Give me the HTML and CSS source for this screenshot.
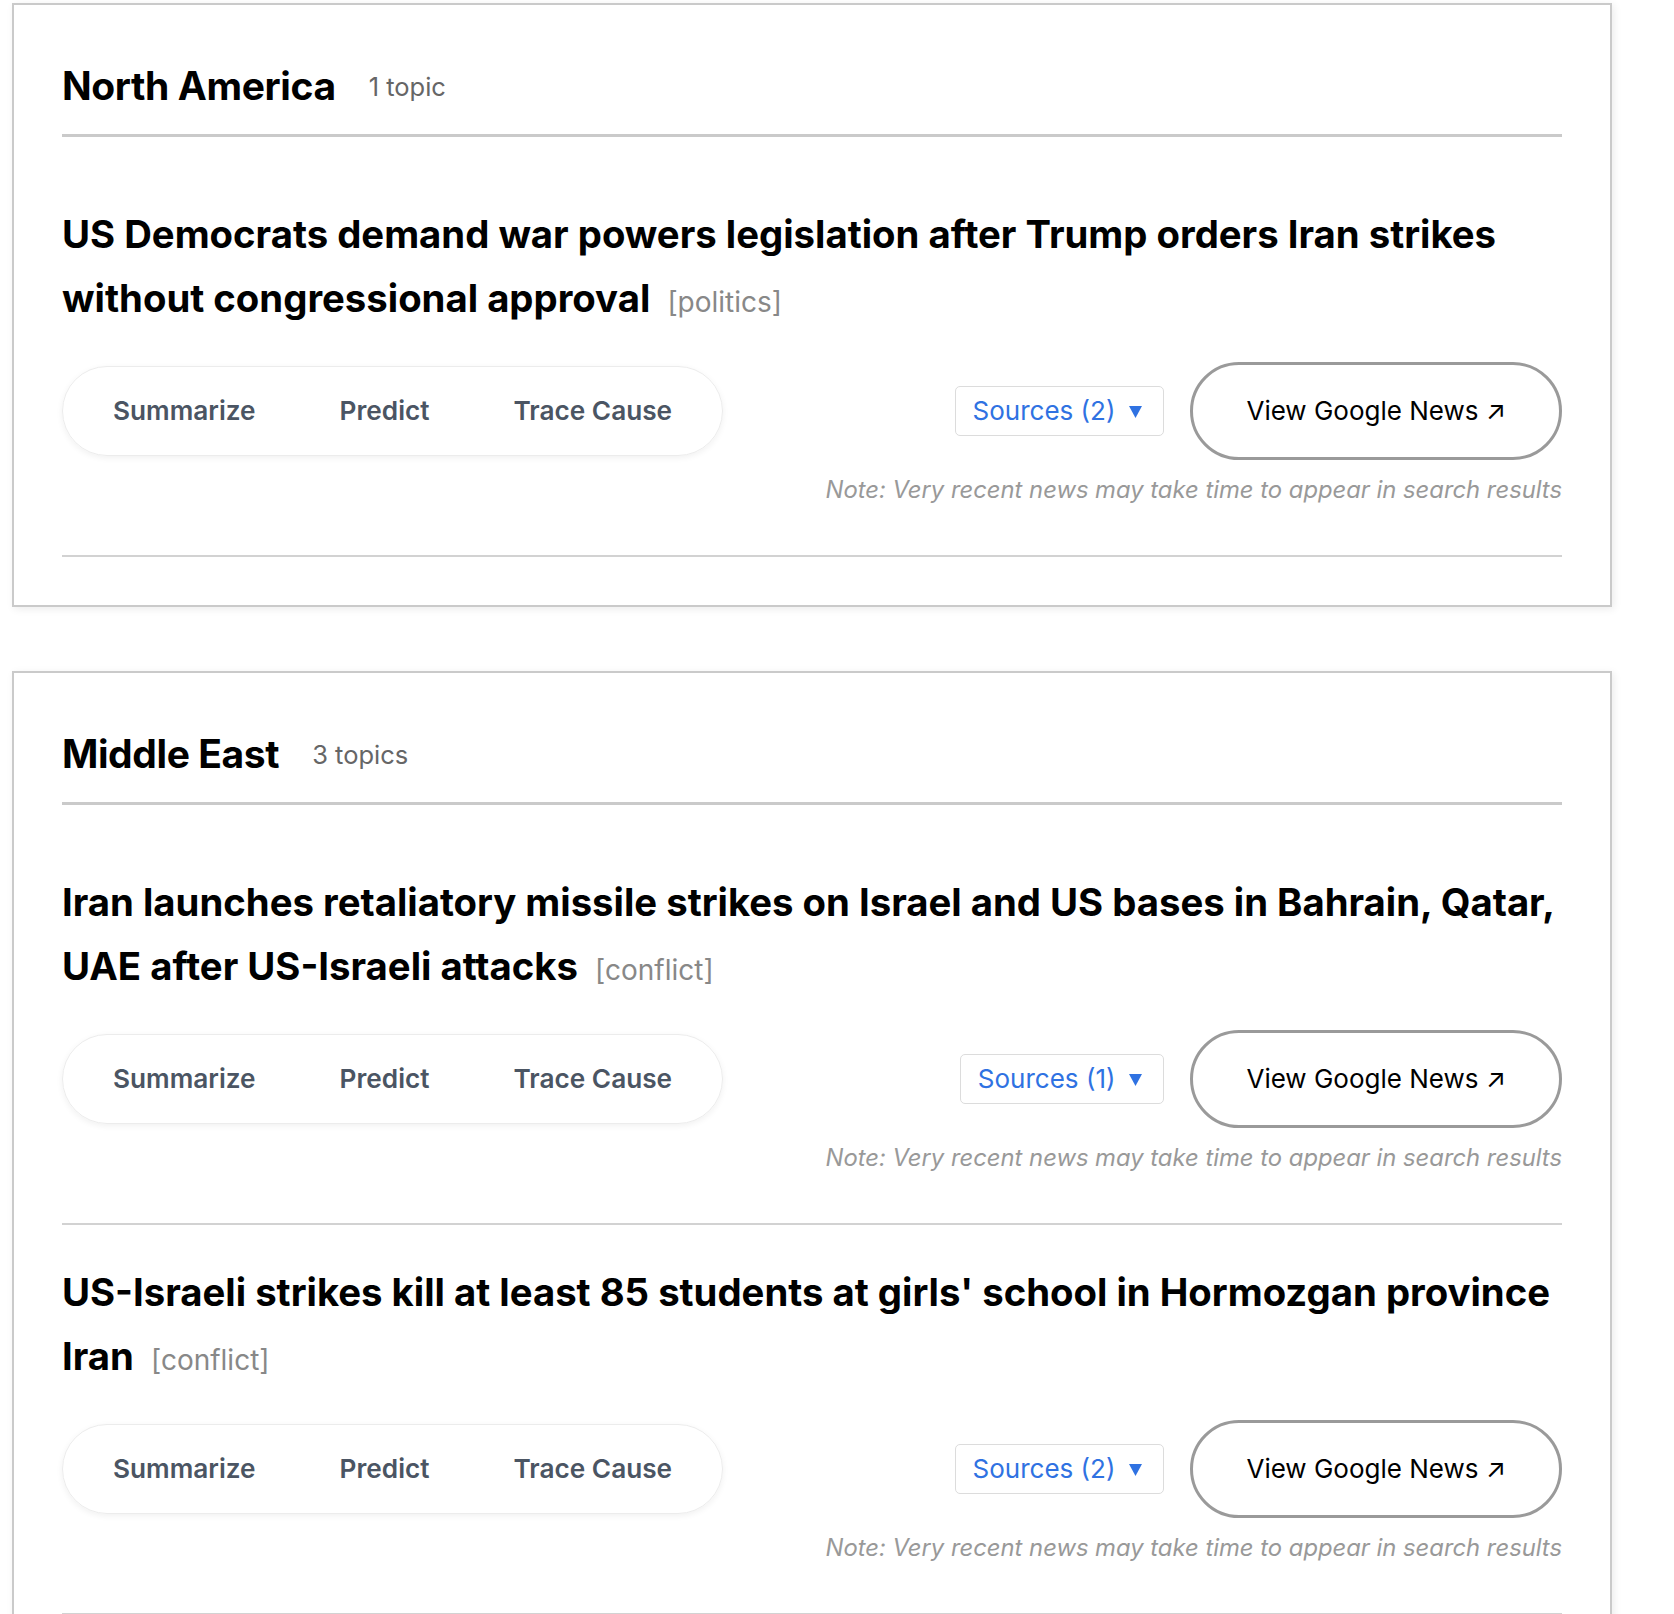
FILE: index.html
```html
<!DOCTYPE html>
<html lang="en">
<head>
    <meta charset="UTF-8">
    <meta name="viewport" content="width=device-width, initial-scale=1.0">
    <title>World News Topics</title>
    <link rel="stylesheet" href="styles.css">
</head>
<body>
    <section class="region-card">
        <div class="region-header">
            <h2 class="region-name">North America</h2>
            <span class="topic-count">1 topic</span>
        </div>
        <div class="topic">
            <h3 class="topic-title">US Democrats demand war powers legislation after Trump orders Iran strikes without congressional approval <span class="topic-category">[politics]</span></h3>
            <div class="topic-actions">
                <div class="action-pill">
                    <button class="action-btn">Summarize</button>
                    <button class="action-btn">Predict</button>
                    <button class="action-btn">Trace Cause</button>
                </div>
                <button class="sources-btn">Sources (2)
                    <svg class="caret" width="13" height="13" viewBox="0 0 13 13"><polygon points="0,1 13,1 6.5,13" fill="currentColor"/></svg>
                </button>
                <a class="news-link" href="#">View Google News ↗</a>
            </div>
            <p class="news-note">Note: Very recent news may take time to appear in search results</p>
        </div>
    </section>

    <section class="region-card">
        <div class="region-header">
            <h2 class="region-name">Middle East</h2>
            <span class="topic-count">3 topics</span>
        </div>
        <div class="topic">
            <h3 class="topic-title">Iran launches retaliatory missile strikes on Israel and US bases in Bahrain, Qatar, UAE after US-Israeli attacks <span class="topic-category">[conflict]</span></h3>
            <div class="topic-actions">
                <div class="action-pill">
                    <button class="action-btn">Summarize</button>
                    <button class="action-btn">Predict</button>
                    <button class="action-btn">Trace Cause</button>
                </div>
                <button class="sources-btn">Sources (1)
                    <svg class="caret" width="13" height="13" viewBox="0 0 13 13"><polygon points="0,1 13,1 6.5,13" fill="currentColor"/></svg>
                </button>
                <a class="news-link" href="#">View Google News ↗</a>
            </div>
            <p class="news-note">Note: Very recent news may take time to appear in search results</p>
        </div>
        <div class="topic">
            <h3 class="topic-title">US-Israeli strikes kill at least 85 students at girls' school in Hormozgan province Iran <span class="topic-category">[conflict]</span></h3>
            <div class="topic-actions">
                <div class="action-pill">
                    <button class="action-btn">Summarize</button>
                    <button class="action-btn">Predict</button>
                    <button class="action-btn">Trace Cause</button>
                </div>
                <button class="sources-btn">Sources (2)
                    <svg class="caret" width="13" height="13" viewBox="0 0 13 13"><polygon points="0,1 13,1 6.5,13" fill="currentColor"/></svg>
                </button>
                <a class="news-link" href="#">View Google News ↗</a>
            </div>
            <p class="news-note">Note: Very recent news may take time to appear in search results</p>
        </div>
    </section>
</body>
</html>
```

FILE: styles.css
```css
body {
    margin: 0;
    padding: 3px 0 0 12px;
    background-color: #fff;
    font-family: Inter, "Noto Sans", sans-serif;
    color: #000;
}
.region-card {
    box-sizing: border-box;
    width: 1600px;
    padding: 57px 48px 48px 48px;
    margin-bottom: 64px;
    border: 2px solid #cacaca;
    background-color: #fff;
    box-shadow: 2px 2px 8px rgba(0, 0, 0, 0.08);
}
.region-header {
    display: flex;
    align-items: center;
    gap: 33px;
    padding-bottom: 24px;
    margin-bottom: 30px;
    border-bottom: 3px solid #cacaca;
}
.region-name {
    margin: 0;
    font-size: 39px;
    line-height: 48px;
    font-weight: 700;
    letter-spacing: -0.4px;
}
.topic-count {
    font-size: 25.5px;
    color: #666;
}
.topic {
    padding: 35px 0 51px;
    border-bottom: 2px solid #d2d2d2;
}
.topic-title {
    margin: 0 0 28px;
    font-size: 38.3px;
    line-height: 64px;
    font-weight: 700;
}
.topic-category {
    margin-left: 8px;
    font-size: 28px;
    font-weight: 400;
    color: #888;
}
.topic-actions {
    display: flex;
    align-items: center;
    gap: 26px;
}
.action-pill {
    display: flex;
    margin-right: auto;
    padding: 8px;
    border: 1px solid #ececec;
    border-radius: 999px;
    box-shadow: 0 2px 6px rgba(0, 0, 0, 0.06);
}
.action-btn {
    padding: 20px 42px;
    border: none;
    background: none;
    font-family: inherit;
    font-size: 26.2px;
    line-height: 32px;
    font-weight: 600;
    color: #4b5563;
    cursor: pointer;
}
.sources-btn {
    display: flex;
    align-items: center;
    gap: 14px;
    padding: 8px 21px 8px 17px;
    border: 1px solid #dcdcdc;
    border-radius: 5px;
    background: #fff;
    font-family: inherit;
    font-size: 26px;
    line-height: 32px;
    color: #2f72e2;
    cursor: pointer;
}
.caret {
    display: block;
}
.news-link {
    padding: 30px 53px;
    border: 3px solid #9a9a9a;
    border-radius: 999px;
    font-size: 26px;
    line-height: 32px;
    color: #000;
    text-decoration: none;
}
.news-note {
    margin: 16px 0 0;
    text-align: right;
    font-size: 23.8px;
    line-height: 28px;
    font-style: italic;
    color: #999;
}
```
